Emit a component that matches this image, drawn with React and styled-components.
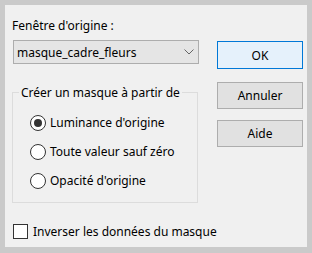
import React from "react";
import styled, { createGlobalStyle } from "styled-components";

const Global = createGlobalStyle`
  html, body { margin: 0; padding: 0; }
  body {
    background: #cacaca;
    font-family: "Noto Sans", "Liberation Sans", sans-serif;
    font-size: 12px;
    color: #000;
  }
  * { box-sizing: border-box; }
`;

const Frame = styled.div`
  width: 312px;
  height: 253px;
  padding: 5px 5px 6px 5px;
`;

const Panel = styled.div`
  height: 100%;
  background: #f0f0f0;
  display: grid;
  grid-template-columns: 187px 86px;
  column-gap: 18px;
  align-items: start;
  padding: 13px 0 0 7px;
`;

const LeftCol = styled.div`
  display: flex;
  flex-direction: column;
`;

const Label = styled.div`
  line-height: 15px;
  white-space: nowrap;
`;

const Combo = styled.div`
  margin: 7px 0 0 1px;
  width: 186px;
  height: 24px;
  border: 1px solid #adadad;
  background: #e5e5e5;
  display: flex;
  align-items: center;
  justify-content: space-between;
  padding: 0 4px 0 3px;
  line-height: 15px;
`;

const Group = styled.fieldset`
  margin: 21px 0 0 0;
  width: 186px;
  border: 1px solid #dcdcdc;
  padding: 8px 0 7px 0;
  display: flex;
  flex-direction: column;
  min-width: 0;
`;

const Legend = styled.legend`
  margin-left: 6px;
  padding: 0 2px;
  line-height: 15px;
  white-space: nowrap;
`;

const OptionRow = styled.label`
  height: 29px;
  padding-left: 17px;
  display: flex;
  align-items: center;
  gap: 4px;
  line-height: 15px;
  white-space: nowrap;
`;

const RadioMark = styled.span`
  width: 16px;
  height: 16px;
  border-radius: 50%;
  border: 1px solid #333;
  background: #fff;
  display: flex;
  align-items: center;
  justify-content: center;
  flex: none;
  &::after {
    content: "";
    width: 8px;
    height: 8px;
    border-radius: 50%;
    background: ${(p) => (p.$checked ? "#333" : "transparent")};
  }
`;

const CheckRow = styled.label`
  margin: 21px 0 0 1px;
  display: flex;
  align-items: center;
  gap: 5px;
  line-height: 15px;
  white-space: nowrap;
`;

const CheckMark = styled.span`
  width: 15px;
  height: 15px;
  border: 1px solid #333;
  background: #fff;
  flex: none;
`;

const RightCol = styled.div`
  display: flex;
  flex-direction: column;
  padding-top: 23px;
`;

const Button = styled.div`
  height: ${(p) => (p.$default ? "28px" : "27px")};
  margin-top: ${(p) => p.$mt || 0}px;
  border: 1px solid ${(p) => (p.$default ? "#0078d7" : "#adadad")};
  background: ${(p) => (p.$default ? "#e5f1fb" : "#e1e1e1")};
  display: flex;
  align-items: center;
  justify-content: center;
  line-height: 15px;
`;

const Chevron = () => (
  <svg width="10" height="6" viewBox="0 0 10 6">
    <path d="M0.5 0.5 L5 5 L9.5 0.5" fill="none" stroke="#666" strokeWidth="1" />
  </svg>
);

export default function App() {
  return (
    <>
      <Global />
      <Frame>
        <Panel>
          <LeftCol>
            <Label>Fenêtre d'origine :</Label>
            <Combo>
              <span>masque_cadre_fleurs</span>
              <Chevron />
            </Combo>
            <Group>
              <Legend>Créer un masque à partir de</Legend>
              <OptionRow>
                <RadioMark $checked />
                Luminance d'origine
              </OptionRow>
              <OptionRow>
                <RadioMark />
                Toute valeur sauf zéro
              </OptionRow>
              <OptionRow>
                <RadioMark />
                Opacité d'origine
              </OptionRow>
            </Group>
            <CheckRow>
              <CheckMark />
              Inverser les données du masque
            </CheckRow>
          </LeftCol>
          <RightCol>
            <Button $default>OK</Button>
            <Button $mt={13}>Annuler</Button>
            <Button $mt={11}>Aide</Button>
          </RightCol>
        </Panel>
      </Frame>
    </>
  );
}
